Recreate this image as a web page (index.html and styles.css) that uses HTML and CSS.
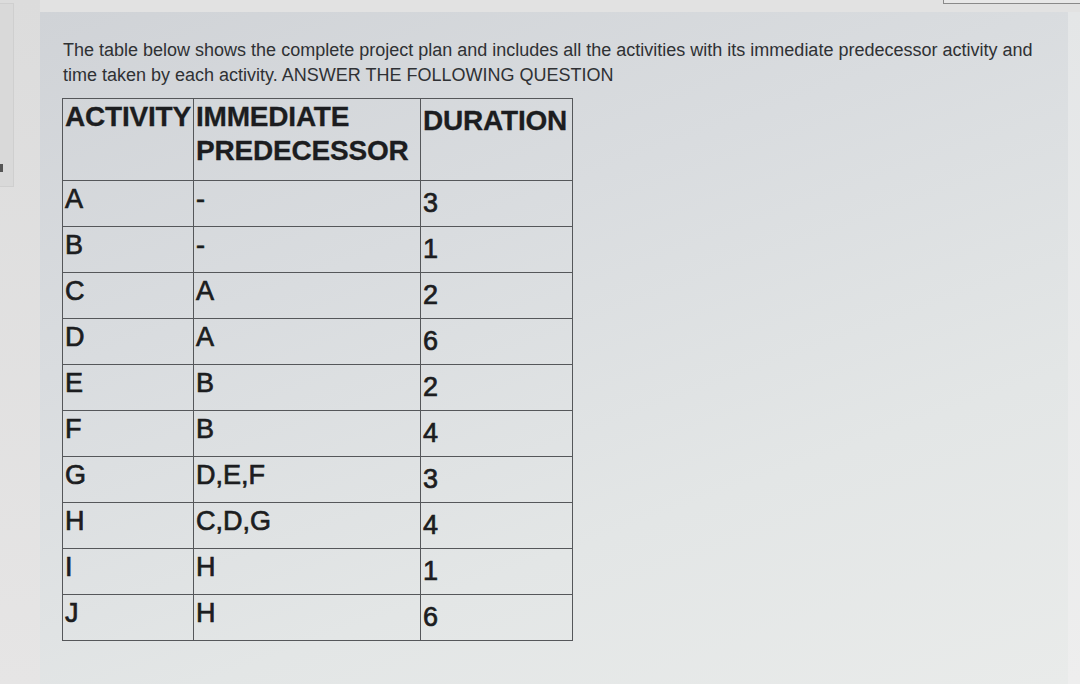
FILE: index.html
```html
<!DOCTYPE html>
<html>
<head>
<meta charset="utf-8">
<link rel="stylesheet" href="styles.css">
</head>
<body>
<div class="screen">
  <div class="gutter">
    <div class="side-box"><span class="side-mark"></span></div>
  </div>
  <div class="main">
    <div class="topbar"><div class="top-box"></div></div>
    <div class="row">
      <div class="panel">
        <p class="intro">The table below shows the complete project plan and includes all the activities with its immediate predecessor activity and time taken by each activity. ANSWER THE FOLLOWING QUESTION</p>
        <table class="plan">
          <colgroup><col class="c1"><col class="c2"><col class="c3"></colgroup>
          <thead>
            <tr><th>ACTIVITY</th><th>IMMEDIATE PREDECESSOR</th><th class="dur">DURATION</th></tr>
          </thead>
          <tbody>
            <tr><td>A</td><td>-</td><td class="num">3</td></tr>
            <tr><td>B</td><td>-</td><td class="num">1</td></tr>
            <tr><td>C</td><td>A</td><td class="num">2</td></tr>
            <tr><td>D</td><td>A</td><td class="num">6</td></tr>
            <tr><td>E</td><td>B</td><td class="num">2</td></tr>
            <tr><td>F</td><td>B</td><td class="num">4</td></tr>
            <tr><td>G</td><td>D,E,F</td><td class="num">3</td></tr>
            <tr><td>H</td><td>C,D,G</td><td class="num">4</td></tr>
            <tr><td>I</td><td>H</td><td class="num">1</td></tr>
            <tr><td>J</td><td>H</td><td class="num">6</td></tr>
          </tbody>
        </table>
      </div>
      <div class="edge"></div>
    </div>
  </div>
</div>
</body>
</html>
```

FILE: styles.css
```css
html, body {
  margin: 0;
  padding: 0;
  width: 1080px;
  height: 684px;
  overflow: hidden;
  background: #dedfdf;
  font-family: "Liberation Sans", Arial, sans-serif;
}
.screen {
  display: flex;
  width: 1080px;
  height: 684px;
}
.gutter {
  width: 40px;
  flex: none;
  background: linear-gradient(180deg, #dcdcdc 0%, #e6e5e5 100%);
  padding-top: 3px;
  box-sizing: border-box;
}
.side-box {
  width: 13px;
  height: 182px;
  border: 1px solid #cfcfcf;
  border-left: none;
  background: #d9d9d9;
  position: relative;
}
.side-mark {
  position: absolute;
  left: 0;
  top: 160px;
  width: 3px;
  height: 8px;
  background: #555;
}
.main {
  flex: 1;
  display: flex;
  flex-direction: column;
}
.topbar {
  height: 12px;
  flex: none;
  display: flex;
  justify-content: flex-end;
  background: #e2e2e2;
}
.top-box {
  width: 136px;
  height: 3px;
  border: 1px solid #8a8a8a;
  border-top: none;
  border-right: none;
  background: #e8e8e8;
}
.row {
  flex: 1;
  display: flex;
}
.panel {
  flex: 1;
  background: linear-gradient(160deg, #d0d3d7 0%, #d9dcdf 35%, #e3e6e6 70%, #e9ebea 100%);
  padding: 26px 0 0 22px;
  box-sizing: border-box;
}
.edge {
  width: 12px;
  flex: none;
  background: linear-gradient(180deg, #e4e6e7 0%, #eeeeee 100%);
}
.intro {
  margin: 0 0 10px 1px;
  width: 990px;
  font-size: 18px;
  line-height: 25px;
  color: #2f3134;
}
.plan {
  border-collapse: collapse;
  table-layout: fixed;
  width: 510px;
  color: #1c1d20;
}
.c1 { width: 131px; }
.c2 { width: 227px; }
.c3 { width: 152px; }
.plan th, .plan td {
  border: 1px solid #55575a;
  text-align: left;
  vertical-align: top;
  padding: 0 0 0 2px;
}
.plan th {
  font-size: 28px;
  font-weight: bold;
  line-height: 34px;
  height: 82px;
  padding-top: 1px;
  box-sizing: border-box;
  letter-spacing: -0.2px;
  -webkit-text-stroke: 0.3px #1c1d20;
}
.plan th.dur {
  padding-top: 5px;
}
.plan td {
  font-size: 27px;
  line-height: 30px;
  height: 46px;
  box-sizing: border-box;
  padding-top: 3px;
  -webkit-text-stroke: 0.7px #1c1d20;
}
.plan td.num {
  padding-top: 7px;
}
```
